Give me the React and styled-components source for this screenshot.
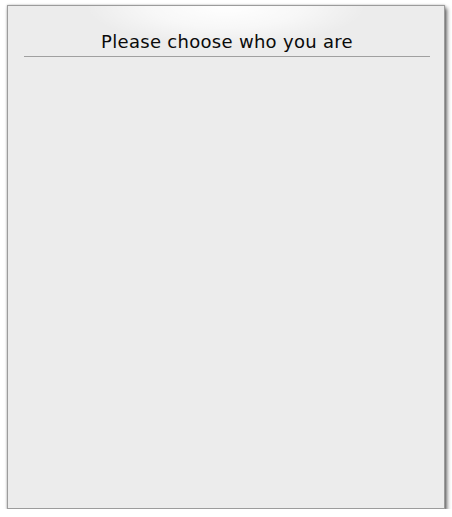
import * as React from 'react';
import styled, { createGlobalStyle } from 'styled-components';

const GlobalStyle = createGlobalStyle`
  html, body {
    margin: 0;
    padding: 0;
    background: #ffffff;
  }
`;

const Page = styled.div`
  padding: 5px 0 0 7px;
`;

const Panel = styled.section`
  box-sizing: border-box;
  width: 438px;
  height: 504px;
  border: 1px solid #9c9c9c;
  background:
    radial-gradient(ellipse 140px 40px at 50% 0, #ffffff 0%, rgba(255, 255, 255, 0.6) 55%, rgba(255, 255, 255, 0) 100%),
    #ececec;
  box-shadow: 2px 3px 4px rgba(0, 0, 0, 0.6), 0 0 2px rgba(0, 0, 0, 0.25);
  padding: 0 14px 0 16px;
`;

const Heading = styled.h2`
  margin: 0;
  padding: 25px 0 3px;
  border-bottom: 1px solid #a0a0a0;
  text-align: center;
  font-family: 'DejaVu Sans', sans-serif;
  font-weight: normal;
  font-size: 18px;
  letter-spacing: 0.3px;
  line-height: 22px;
  color: #0a0a0a;
`;

export default function App() {
  return (
    <Page>
      <GlobalStyle />
      <Panel>
        <Heading>Please choose who you are</Heading>
      </Panel>
    </Page>
  );
}
